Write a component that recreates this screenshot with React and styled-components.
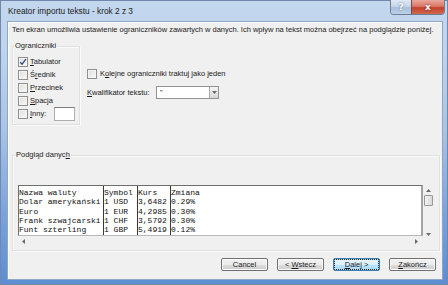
import React from 'react';
import styled, { createGlobalStyle } from 'styled-components';

const Global = createGlobalStyle`
  html, body { margin: 0; padding: 0; background: #ffffff; }
  body { font-family: "Liberation Sans", Arial, sans-serif; }
  #root { width: 448px; height: 285px; }
`;

const Window = styled.div`
  box-sizing: border-box;
  width: 448px;
  height: 285px;
  padding: 0 5px 5px 7px;
  display: flex;
  flex-direction: column;
  background: linear-gradient(180deg, #c3d7ee 0%, #bed4ed 18%, #a9c4e6 45%, #7aa3dc 75%, #5b8dd3 100%);
  box-shadow: inset 0 0 0 1px #7188aa;
`;

const TitleBar = styled.div`
  height: 21px;
  flex: none;
  display: flex;
  align-items: flex-start;
`;

const Title = styled.div`
  align-self: center;
  padding-left: 1px;
  font-size: 8.3px;
  line-height: 10px;
  color: #1a1a1a;
  flex: 1;
`;

const Caption = styled.div`
  display: flex;
  margin-right: -2px;
  border: 1px solid #6d7d93;
  border-top: none;
  border-radius: 0 0 4px 4px;
  overflow: hidden;
  height: 14px;
`;

const CapBtn = styled.div`
  width: ${p => p.$w}px;
  height: 14px;
  display: flex;
  align-items: center;
  justify-content: center;
  color: #ffffff;
  font-family: "DejaVu Sans", sans-serif;
  font-weight: bold;
  font-size: ${p => p.$fs}px;
  background: ${p => p.$red
    ? 'linear-gradient(180deg, #e8a89b 0%, #d9786a 45%, #c2402b 55%, #cf6a4e 100%)'
    : 'linear-gradient(180deg, #dfe8f3 0%, #c6d6ea 45%, #a9bfdb 55%, #bcd0e8 100%)'};
  border-left: ${p => (p.$red ? '1px solid #7a4a4a' : 'none')};
  text-shadow: 0 0 2px ${p => (p.$red ? '#7a1d10' : '#4a6484')};
`;

const Content = styled.div`
  flex: 1;
  min-height: 0;
  background: #f0f0f0;
  border: 1px solid #8fa6c4;
  box-shadow: inset 1px 1px 0 #ffffff;
  padding: 3px 0 0 4px;
  display: flex;
  flex-direction: column;
  font-size: 7.5px;
  line-height: 10px;
  color: #1a1a1a;
`;

const Intro = styled.div`
  white-space: nowrap;
`;

const TopRow = styled.div`
  display: flex;
  align-items: flex-start;
  margin-top: 6px;
`;

const Group = styled.fieldset`
  box-sizing: border-box;
  margin: ${p => p.$m || 0};
  padding: 0;
  min-width: 0;
  width: ${p => p.$w}px;
  height: ${p => p.$h}px;
  border: 1px solid #e0e0e0;
  box-shadow: 1px 1px 0 #fbfbfb, inset 1px 1px 0 #fbfbfb;
`;

const Legend = styled.legend`
  padding: 0 1px;
  margin-left: ${p => p.$ml}px;
  font-size: 7.5px;
  line-height: 10px;
  color: #1a1a1a;
`;

const GroupBody = styled.div`
  padding: ${p => p.$p};
  display: flex;
  flex-direction: column;
`;

const CheckRow = styled.label`
  display: flex;
  align-items: center;
  height: ${p => p.$h || 13}px;
  white-space: nowrap;
`;

const Box = styled.span`
  box-sizing: border-box;
  width: 10px;
  height: 10px;
  flex: none;
  margin-right: ${p => p.$mr || 2}px;
  border: 1px solid #8e8f8f;
  background: linear-gradient(135deg, #dcdcdc 0%, #eeeeee 60%, #fbfbfb 100%);
  box-shadow: inset 0 0 0 1px #f4f4f4;
  display: flex;
  align-items: center;
  justify-content: center;
`;

const Acc = styled.span`
  text-decoration: underline;
  text-underline-offset: 1px;
`;

const SmallInput = styled.span`
  box-sizing: border-box;
  width: 21px;
  height: 14px;
  margin-left: 8px;
  background: #ffffff;
  border: 1px solid #abadb3;
  border-top-color: #7a7d84;
`;

const Options = styled.div`
  display: flex;
  flex-direction: column;
  margin-left: 7px;
  padding-top: 26px;
`;

const QualRow = styled.div`
  display: flex;
  align-items: center;
  height: 13px;
  margin-top: 6px;
`;

const QualLabel = styled.span`
  width: 69px;
  white-space: nowrap;
`;

const Select = styled.div`
  box-sizing: border-box;
  width: 63px;
  height: 13px;
  background: #ffffff;
  border: 1px solid #8f9195;
  display: flex;
  align-items: center;
  justify-content: space-between;
  padding-left: 3px;
  font-size: 7.5px;
`;

const SelBtn = styled.span`
  box-sizing: border-box;
  width: 9px;
  height: 11px;
  border-left: 1px solid #a9abaf;
  background: linear-gradient(180deg, #f4f4f4 0%, #e6e6e6 50%, #d6d6d6 100%);
  display: flex;
  align-items: center;
  justify-content: center;
`;

const Preview = styled.div`
  display: grid;
  grid-template-columns: 405px 10px;
  grid-template-rows: 51px 11px;
  width: 415px;
`;

const DataBox = styled.div`
  box-sizing: border-box;
  background: #ffffff;
  border: 1px solid #6f6f6f;
  border-right: 2px solid #a3a3a3;
  border-bottom-color: #b8b8b8;
  display: flex;
  overflow: hidden;
`;

const Col = styled.div`
  width: ${p => (p.$w ? `${p.$w}px` : 'auto')};
  flex: ${p => (p.$w ? 'none' : '1')};
  border-right: ${p => (p.$w ? '1px solid #3a3a3a' : 'none')};
  padding-top: 2px;
  font-family: "Liberation Mono", "Courier New", monospace;
  font-size: 8px;
  line-height: 9.3px;
  white-space: pre;
  color: #111;
  overflow: hidden;
`;

const VScroll = styled.div`
  display: flex;
  flex-direction: column;
  align-items: center;
  padding-top: 4px;
`;

const Spacer = styled.div`
  flex: 1;
`;

const Thumb = styled.div`
  box-sizing: border-box;
  width: 9px;
  height: 11px;
  margin-top: 3px;
  border: 1px solid #979797;
  border-radius: 1px;
  background: linear-gradient(90deg, #f3f3f3 0%, #e4e4e4 60%, #d8d8d8 100%);
`;

const HScroll = styled.div`
  display: flex;
  align-items: center;
  justify-content: space-between;
  padding: 0 5px 0 4px;
`;

const ButtonRow = styled.div`
  display: flex;
  justify-content: flex-end;
  gap: 9px;
  margin-top: 7px;
  padding-right: 6px;
`;

const Button = styled.div`
  box-sizing: border-box;
  width: 47px;
  height: 13px;
  display: flex;
  align-items: stretch;
  justify-content: stretch;
  padding: ${p => (p.$focus ? '1px' : '0')};
  border: 1px solid ${p => (p.$focus ? '#3c7fb1' : '#707070')};
  border-radius: 2px;
  background: ${p => (p.$focus
    ? 'linear-gradient(180deg, #eaf6fd 0%, #d9f0fc 50%, #bee6fd 51%, #a7d9f5 100%)'
    : 'linear-gradient(180deg, #f2f2f2 0%, #ebebeb 50%, #dddddd 51%, #cfcfcf 100%)')};
  box-shadow: inset 0 0 0 1px ${p => (p.$focus ? '#b5dcf5' : '#fbfbfb')};
  font-size: 7.5px;
  color: #1a1a1a;
  white-space: nowrap;
`;

const ButtonLabel = styled.span`
  flex: 1;
  display: flex;
  align-items: center;
  justify-content: center;
  outline: ${p => (p.$focus ? '1px dotted #2a2a2a' : 'none')};
  outline-offset: 0;
`;

const Check = () => (
  <svg width="8" height="8" viewBox="0 0 8 8">
    <path d="M1.2 4.2 L3.1 6.2 L6.9 1.2" fill="none" stroke="#3d4f80" strokeWidth="1.4" />
  </svg>
);

const Arrow = ({ dir }) => {
  const paths = {
    up: 'M0 3 L2.5 0 L5 3 Z',
    down: 'M0 0 L5 0 L2.5 3 Z',
    left: 'M3 0 L3 5 L0 2.5 Z',
    right: 'M0 0 L0 5 L3 2.5 Z',
  };
  const horiz = dir === 'left' || dir === 'right';
  return (
    <svg width={horiz ? 3 : 5} height={horiz ? 5 : 3} viewBox={horiz ? '0 0 3 5' : '0 0 5 3'}>
      <path d={paths[dir]} fill="#6a6a6a" />
    </svg>
  );
};

const rows = [
  ['Nazwa waluty', 'Symbol', 'Kurs', 'Zmiana'],
  ['Dolar amerykański', '1 USD', '3,6482', '0.29%'],
  ['Euro', '1 EUR', '4,2985', '0.30%'],
  ['Frank szwajcarski', '1 CHF', '3,5792', '0.30%'],
  ['Funt szterling', '1 GBP', '5,4919', '0.12%'],
];
const colWidths = [84, 33, 32, 0];

const delims = [
  { pre: '', acc: 'T', post: 'abulator', checked: true },
  { pre: 'Ś', acc: 'r', post: 'ednik' },
  { pre: '', acc: 'P', post: 'rzecinek' },
  { pre: '', acc: 'S', post: 'pacja' },
];

export default function App() {
  return (
    <>
      <Global />
      <Window>
        <TitleBar>
          <Title>Kreator importu tekstu - krok 2 z 3</Title>
          <Caption>
            <CapBtn $w={20} $fs={9}>?</CapBtn>
            <CapBtn $w={32} $fs={9} $red>x</CapBtn>
          </Caption>
        </TitleBar>
        <Content>
          <Intro>
            Ten ekran umożliwia ustawienie ograniczników zawartych w danych. Ich wpływ na tekst można obejrzeć na podglądzie poniżej.
          </Intro>
          <TopRow>
            <Group $w={68} $h={84}>
              <Legend $ml={1}>Ograniczniki</Legend>
              <GroupBody $p="4px 0 0 5px">
                {delims.map((d, i) => (
                  <CheckRow key={i}>
                    <Box>{d.checked && <Check />}</Box>
                    <span>
                      {d.pre}
                      <Acc>{d.acc}</Acc>
                      {d.post}
                    </span>
                  </CheckRow>
                ))}
                <CheckRow $h={14}>
                  <Box />
                  <span>
                    <Acc>I</Acc>nny:
                  </span>
                  <SmallInput />
                </CheckRow>
              </GroupBody>
            </Group>
            <Options>
              <CheckRow>
                <Box $mr={3} />
                <span>
                  K<Acc>o</Acc>lejne ograniczniki traktuj jako jeden
                </span>
              </CheckRow>
              <QualRow>
                <QualLabel>
                  <Acc>K</Acc>walifikator tekstu:
                </QualLabel>
                <Select>
                  <span>"</span>
                  <SelBtn>
                    <Arrow dir="down" />
                  </SelBtn>
                </Select>
              </QualRow>
            </Options>
          </TopRow>
          <Group $w={428} $h={101} $m="25px 0 0 0">
            <Legend $ml={2}>
              Podgląd danyc<Acc>h</Acc>
            </Legend>
            <GroupBody $p="25px 0 0 5px">
              <Preview>
                <DataBox>
                  {colWidths.map((w, ci) => (
                    <Col key={ci} $w={w}>
                      {rows.map(r => r[ci]).join('\n')}
                    </Col>
                  ))}
                </DataBox>
                <VScroll>
                  <Arrow dir="up" />
                  <Thumb />
                  <Spacer />
                  <Arrow dir="down" />
                </VScroll>
                <HScroll>
                  <Arrow dir="left" />
                  <Arrow dir="right" />
                </HScroll>
              </Preview>
            </GroupBody>
          </Group>
          <ButtonRow>
            <Button>
              <ButtonLabel>Cancel</ButtonLabel>
            </Button>
            <Button>
              <ButtonLabel>
                <span>
                  &lt; <Acc>W</Acc>stecz
                </span>
              </ButtonLabel>
            </Button>
            <Button $focus>
              <ButtonLabel $focus>
                <span>
                  <Acc>D</Acc>alej &gt;
                </span>
              </ButtonLabel>
            </Button>
            <Button>
              <ButtonLabel>
                <span>
                  <Acc>Z</Acc>akończ
                </span>
              </ButtonLabel>
            </Button>
          </ButtonRow>
        </Content>
      </Window>
    </>
  );
}
